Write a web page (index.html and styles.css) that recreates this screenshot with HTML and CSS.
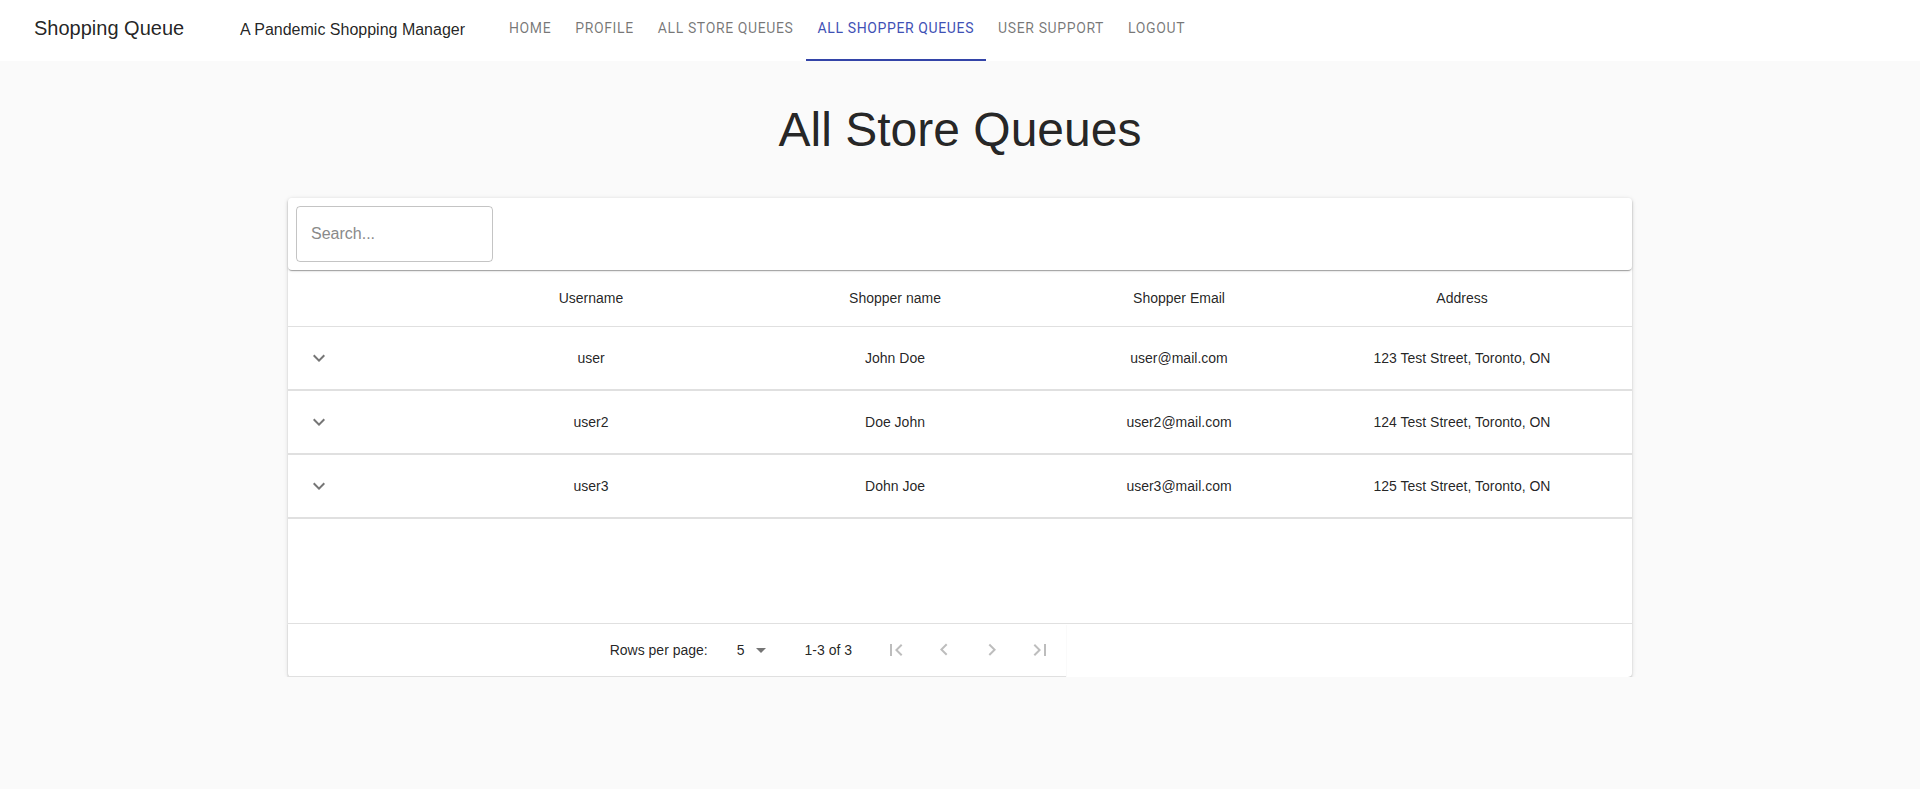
FILE: index.html
```html
<!DOCTYPE html>
<html lang="en">
<head>
<meta charset="utf-8">
<title>All Store Queues</title>
<link rel="stylesheet" href="styles.css">
</head>
<body>
<header class="appbar">
  <div class="brand">Shopping Queue</div>
  <div class="subtitle">A Pandemic Shopping Manager</div>
  <nav class="tabs">
    <a class="tab" href="#">HOME</a>
    <a class="tab" href="#">PROFILE</a>
    <a class="tab" href="#">ALL STORE QUEUES</a>
    <a class="tab active" href="#">ALL SHOPPER QUEUES</a>
    <a class="tab" href="#">USER SUPPORT</a>
    <a class="tab" href="#">LOGOUT</a>
  </nav>
</header>
<main class="page">
  <h1 class="title">All Store Queues</h1>
  <section class="card">
    <div class="toolbar">
      <input class="search" type="text" placeholder="Search...">
    </div>
    <table class="grid">
      <colgroup>
        <col class="c0"><col class="c1"><col class="c2"><col class="c3"><col class="c4">
      </colgroup>
      <thead>
        <tr class="head-row">
          <th></th>
          <th>Username</th>
          <th>Shopper name</th>
          <th>Shopper Email</th>
          <th>Address</th>
        </tr>
      </thead>
      <tbody>
        <tr class="row">
          <td class="exp"><span class="icon-btn"><svg viewBox="0 0 24 24" width="24" height="24"><path d="M7.41 8.59L12 13.17l4.59-4.58L18 10l-6 6-6-6 1.41-1.41z"/></svg></span></td>
          <td>user</td>
          <td>John Doe</td>
          <td>user@mail.com</td>
          <td>123 Test Street, Toronto, ON</td>
        </tr>
        <tr class="row">
          <td class="exp"><span class="icon-btn"><svg viewBox="0 0 24 24" width="24" height="24"><path d="M7.41 8.59L12 13.17l4.59-4.58L18 10l-6 6-6-6 1.41-1.41z"/></svg></span></td>
          <td>user2</td>
          <td>Doe John</td>
          <td>user2@mail.com</td>
          <td>124 Test Street, Toronto, ON</td>
        </tr>
        <tr class="row">
          <td class="exp"><span class="icon-btn"><svg viewBox="0 0 24 24" width="24" height="24"><path d="M7.41 8.59L12 13.17l4.59-4.58L18 10l-6 6-6-6 1.41-1.41z"/></svg></span></td>
          <td>user3</td>
          <td>Dohn Joe</td>
          <td>user3@mail.com</td>
          <td>125 Test Street, Toronto, ON</td>
        </tr>
        <tr class="empty"><td colspan="5"></td></tr>
      </tbody>
      <tfoot>
        <tr>
          <td class="pager-cell" colspan="3">
            <div class="pager">
              <span class="caption">Rows per page:</span>
              <span class="select"><span class="sel-val">5</span><svg class="sel-icon" viewBox="0 0 24 24" width="24" height="24"><path d="M7 10l5 5 5-5z"/></svg></span>
              <span class="caption">1-3 of 3</span>
              <span class="actions">
                <span class="pg-btn"><svg viewBox="0 0 24 24" width="24" height="24"><path d="M18.41 16.59L13.82 12l4.59-4.59L17 6l-6 6 6 6zM6 6h2v12H6z"/></svg></span>
                <span class="pg-btn"><svg viewBox="0 0 24 24" width="24" height="24"><path d="M15.41 16.09l-4.58-4.59 4.58-4.59L14 5.5l-6 6 6 6z"/></svg></span>
                <span class="pg-btn"><svg viewBox="0 0 24 24" width="24" height="24"><path d="M8.59 16.34l4.58-4.59-4.58-4.59L10 5.75l6 6-6 6z"/></svg></span>
                <span class="pg-btn"><svg viewBox="0 0 24 24" width="24" height="24"><path d="M5.59 7.41L10.18 12l-4.59 4.59L7 18l6-6-6-6zM16 6h2v12h-2z"/></svg></span>
              </span>
            </div>
          </td>
        </tr>
      </tfoot>
    </table>
  </section>
</main>
</body>
</html>
```
FILE: styles.css
```css
html, body {
  margin: 0;
  padding: 0;
}
body {
  background: #fafafa;
  font-family: "Liberation Sans", Arial, sans-serif;
  color: rgba(0, 0, 0, 0.87);
}

/* ---------- App bar ---------- */
.appbar {
  display: flex;
  height: 61px;
  background: #ffffff;
}
.brand {
  box-sizing: border-box;
  flex: 0 0 240px;
  padding: 16px 0 0 34px;
  font-size: 20px;
  line-height: 24px;
  color: rgba(0, 0, 0, 0.87);
  white-space: nowrap;
}
.subtitle {
  flex: 0 0 257px;
  padding-top: 20px;
  font-size: 16px;
  line-height: 20px;
  color: rgba(0, 0, 0, 0.87);
  white-space: nowrap;
}
.tabs {
  display: flex;
}
.tab {
  box-sizing: border-box;
  height: 61px;
  padding: 20px 12px 0;
  font-family: Roboto, "Liberation Sans", sans-serif;
  font-size: 14px;
  font-weight: 400;
  line-height: 16px;
  letter-spacing: 0.62px;
  color: rgba(0, 0, 0, 0.54);
  text-decoration: none;
  white-space: nowrap;
  border-bottom: 2px solid transparent;
}
.tab.active {
  color: #3f51b5;
  border-bottom-color: #3344a8;
}

/* ---------- Page ---------- */
.title {
  margin: 41px 0 40px;
  font-size: 48px;
  font-weight: 400;
  line-height: 56px;
  text-align: center;
  color: rgba(0, 0, 0, 0.87);
}
.card {
  width: 1344px;
  margin: 0 auto;
  background: #ffffff;
  border-radius: 4px;
  box-shadow: 0px 3px 1px -2px rgba(0, 0, 0, 0.2), 0px 2px 2px 0px rgba(0, 0, 0, 0.14), 0px 1px 5px 0px rgba(0, 0, 0, 0.12);
}
.toolbar {
  box-sizing: border-box;
  height: 72px;
  padding: 8px;
  background: #ffffff;
  border-radius: 4px;
  box-shadow: 0px 2px 1px -1px rgba(0, 0, 0, 0.2), 0px 1px 1px 0px rgba(0, 0, 0, 0.14), 0px 1px 3px 0px rgba(0, 0, 0, 0.12);
  position: relative;
}
.search {
  box-sizing: border-box;
  display: block;
  width: 197px;
  height: 56px;
  margin: 0;
  padding: 0 14px;
  border: 1px solid rgba(0, 0, 0, 0.23);
  border-radius: 4px;
  font-family: "Liberation Sans", Arial, sans-serif;
  font-size: 16px;
  color: rgba(0, 0, 0, 0.87);
  background: transparent;
  outline: none;
}
.search::placeholder {
  color: #8a8a8a;
  opacity: 1;
}

/* ---------- Table ---------- */
.grid {
  width: 100%;
  table-layout: fixed;
  border-collapse: separate;
  border-spacing: 0;
  font-size: 14px;
}
.c0 { width: 170px; }
.c1 { width: 266px; }
.c2 { width: 342px; }
.c3 { width: 226px; }
.c4 { width: 340px; }

.head-row th {
  padding: 16px;
  font-weight: 400;
  line-height: 24px;
  text-align: center;
  color: rgba(0, 0, 0, 0.87);
  border-bottom: 1px solid #e0e0e0;
}
.row td {
  height: 30px;
  padding: 16px;
  line-height: 20px;
  text-align: center;
  vertical-align: middle;
  border-bottom: 2px solid #e0e0e0;
}
.row td.exp {
  text-align: left;
}
.icon-btn {
  display: flex;
  align-items: center;
  justify-content: center;
  width: 30px;
  height: 30px;
  fill: rgba(0, 0, 0, 0.54);
}
.empty td {
  height: 104px;
  padding: 0;
  border-bottom: 1px solid #e0e0e0;
}

/* ---------- Pagination ---------- */
.pager-cell {
  padding: 0;
  border-bottom: 1px solid #e0e0e0;
  box-shadow: 0 1px 1px rgba(0, 0, 0, 0.12);
}
.pager {
  display: flex;
  align-items: center;
  justify-content: flex-end;
  height: 52px;
  padding-right: 2px;
  font-size: 14px;
  line-height: 20px;
  color: rgba(0, 0, 0, 0.87);
}
.select {
  display: flex;
  align-items: center;
  margin: 0 32px 0 8px;
}
.sel-val {
  padding-left: 21px;
  padding-right: 4px;
}
.sel-icon {
  fill: rgba(0, 0, 0, 0.54);
}
.actions {
  display: flex;
  margin-left: 20px;
}
.pg-btn {
  display: flex;
  align-items: center;
  justify-content: center;
  width: 48px;
  height: 48px;
  fill: rgba(0, 0, 0, 0.26);
}
```
